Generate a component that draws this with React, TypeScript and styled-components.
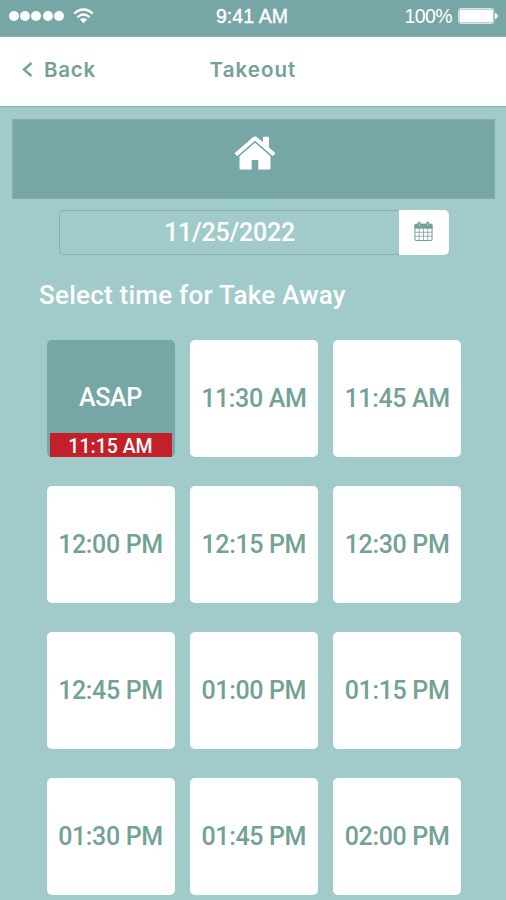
import React from 'react';
import styled, { createGlobalStyle } from 'styled-components';

const teal = '#77a6a6';
const pale = '#a1cbca';
const ink = '#73a197';

const GlobalStyle = createGlobalStyle`
  * { box-sizing: border-box; }
  body { margin: 0; background: ${pale}; font-family: Roboto, sans-serif; }
`;

const Screen = styled.main`
  width: 506px;
  height: 900px;
  overflow: hidden;
  background: ${pale};
`;

const StatusBar = styled.header`
  display: grid;
  grid-template-columns: 1fr auto 1fr;
  align-items: center;
  height: 37px;
  padding: 0 8px 4px 9px;
  background: ${teal};
  border-bottom: 1px solid #8db5b5;
  color: #fff;
  font-family: 'Liberation Sans', sans-serif;
`;

const Signal = styled.div`
  display: flex;
  align-items: center;
  gap: 1.2px;
`;

const Dot = styled.span`
  width: 10px;
  height: 10px;
  border-radius: 50%;
  background: #fff;
`;

const WifiIcon = styled.svg`
  margin: 0 0 1px 8px;
`;

const Clock = styled.span`
  margin-right: 3px;
  font-size: 19.5px;
  line-height: 32px;
  letter-spacing: 0.1px;
  -webkit-text-stroke: 0.4px #fff;
`;

const Power = styled.div`
  display: flex;
  align-items: center;
  justify-content: flex-end;
  gap: 6px;
  font-size: 19.5px;
  line-height: 32px;
  letter-spacing: -0.6px;
`;

const NavBar = styled.nav`
  display: grid;
  grid-template-columns: 1fr auto 1fr;
  align-items: center;
  height: 70px;
  padding: 0 21px 4px;
  background: #fff;
  border-bottom: 1.5px solid #86b1ae;
  color: ${ink};
  font: 600 20.5px/30px Inter, sans-serif;
`;

const Back = styled.span`
  display: flex;
  align-items: center;
  gap: 10px;
  letter-spacing: 0.75px;
`;

const Title = styled.span`
  letter-spacing: 1.05px;
`;

const HomeBanner = styled.section`
  display: flex;
  justify-content: center;
  height: 80px;
  margin: 12px 11px 0 12px;
  padding: 16px 0 0 3px;
  background: ${teal};
  border: 1px solid #82afae;
`;

const DateField = styled.div`
  display: flex;
  width: 390px;
  height: 45px;
  margin: 11px 0 0 59px;
`;

const DateValue = styled.div`
  flex: 1;
  border: 1px solid #85b3b1;
  border-right: 0;
  border-radius: 5px 0 0 5px;
  color: #fff;
  font-size: 25px;
  font-weight: 500;
  line-height: 43px;
  letter-spacing: -0.25px;
  text-align: center;
`;

const DateButton = styled.div`
  display: flex;
  align-items: center;
  justify-content: center;
  width: 50px;
  padding: 0 1px 3px 0;
  background: #fff;
  border-radius: 0 5px 5px 0;
`;

const Heading = styled.h1`
  margin: 25px 0 0 39px;
  color: #fff;
  font-size: 26px;
  font-weight: 500;
  line-height: 30px;
  letter-spacing: 0.24px;
`;

const Slots = styled.div`
  display: grid;
  grid-template-columns: repeat(3, 128px);
  grid-auto-rows: 117px;
  gap: 29px 15.3px;
  margin: 29.6px 0 0 46.5px;
`;

const Slot = styled.div<{ $selected?: boolean }>`
  display: flex;
  flex-direction: column;
  justify-content: flex-end;
  padding: 0 3px;
  border-radius: 5px;
  background: ${(p) => (p.$selected ? teal : '#fff')};
  color: ${(p) => (p.$selected ? '#fff' : ink)};
  font-size: 25px;
  font-weight: 500;
  letter-spacing: -0.35px;
  text-align: center;
  white-space: nowrap;
`;

const SlotLabel = styled.span`
  flex: 1;
  line-height: 118px;
  height: 94px;
`;

const ReadyTime = styled.span`
  height: 24px;
  background: #c4202a;
  font-size: 19.5px;
  line-height: 27px;
  letter-spacing: 0;
`;

const times = [
  '11:30 AM', '11:45 AM',
  '12:00 PM', '12:15 PM', '12:30 PM',
  '12:45 PM', '01:00 PM', '01:15 PM',
  '01:30 PM', '01:45 PM', '02:00 PM',
];

export default function App() {
  return (
    <Screen>
      <GlobalStyle />
      <StatusBar>
        <Signal>
          {[0, 1, 2, 3, 4].map((n) => <Dot key={n} />)}
          <WifiIcon width="21" height="16" viewBox="0 0 21 16" fill="none" stroke="#fff" strokeWidth="2.2">
            <path d="M1.2 5.6Q10.5-2.6 19.8 5.6M4.4 9.2Q10.5 3.8 16.6 9.2" />
            <path d="M6.9 11.5Q10.5 8.4 14.1 11.5L10.5 15.2Z" fill="#fff" stroke="none" />
          </WifiIcon>
        </Signal>
        <Clock>9:41 AM</Clock>
        <Power>
          <span>100%</span>
          <svg width="40" height="16" viewBox="0 0 40 16" fill="#fff">
            <rect x="0.5" y="0.5" width="35.5" height="15" rx="2.5" fill="none" stroke="#d5e5e5" />
            <rect x="1.5" y="1.5" width="33.5" height="13" rx="1" />
            <path d="M37 5Q40 6 40 8T37 11Z" />
          </svg>
        </Power>
      </StatusBar>
      <NavBar>
        <Back>
          <svg width="13" height="16" viewBox="0 0 13 16" fill="none" stroke={ink} strokeWidth="2.4">
            <path d="M10.5 1L3 7.5L10.5 14" />
          </svg>
          Back
        </Back>
        <Title>Takeout</Title>
      </NavBar>
      <HomeBanner>
        <svg width="42" height="35" viewBox="0 0 42 35" fill="#fff">
          <path d="M21 6.4L36.5 20V32.3Q36.5 33.5 35.3 33.5H24.3V24H17.7V33.5H6.7Q5.5 33.5 5.5 32.3V20Z" />
          <path d="M0.5 17.2L18.7 1.4Q21 -0.2 23.3 1.4L29 6.3V1.5Q29 0.7 29.8 0.7H34.2Q35 0.7 35 1.5V11.5L41.5 17.2L39.2 19.8Q38.5 20.3 37.8 19.7L21 5.2L4.2 19.7Q3.5 20.3 2.8 19.8Z" />
          <path d="M4.2 20.2L21 5.7L37.8 20.2" fill="none" stroke={teal} strokeWidth="1.5" />
        </svg>
      </HomeBanner>
      <DateField>
        <DateValue>11/25/2022</DateValue>
        <DateButton>
          <svg width="19" height="21" viewBox="0 0 20 22" fill="none" stroke={ink}>
            <rect x="1" y="3.5" width="18" height="17" rx="1.5" strokeWidth="1.1" />
            <path d="M1 3.5H19V7.5H1Z" fill={ink} />
            <path d="M5.5 7.5V20M10 7.5V20M14.5 7.5V20M1 11.8H19M1 16H19" strokeWidth="0.8" />
            <path d="M5.5 2V5M14.5 2V5" strokeWidth="3.2" strokeLinecap="round" />
            <path d="M5.5 2.5V5M14.5 2.5V5" stroke="#c7dbd6" />
          </svg>
        </DateButton>
      </DateField>
      <Heading>Select time for Take Away</Heading>
      <Slots>
        <Slot $selected>
          <SlotLabel>ASAP</SlotLabel>
          <ReadyTime>11:15 AM</ReadyTime>
        </Slot>
        {times.map((time) => (
          <Slot key={time}><SlotLabel>{time}</SlotLabel></Slot>
        ))}
      </Slots>
    </Screen>
  );
}
